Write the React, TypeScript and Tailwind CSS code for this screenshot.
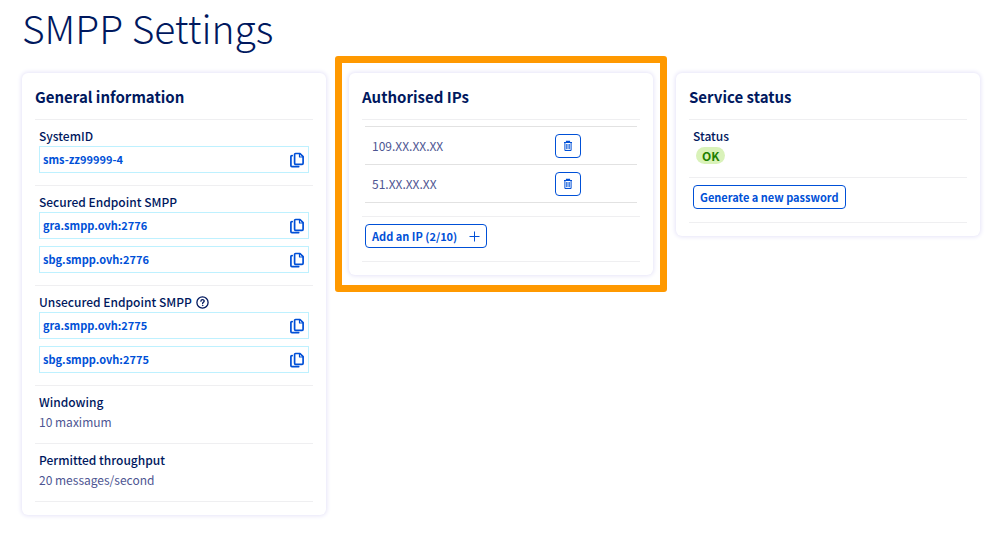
import type { ReactNode } from "react";

type CardProps = { title: string; children: ReactNode };

function Card({ title, children }: CardProps) {
  return (
    <section className="rounded-md bg-white px-[13px] pb-[13px] shadow-[0_0_4px_1px_#e6e4f8]">
      <h2 className="border-b border-[#efeff1] pt-[14px] pb-3 text-[15px] leading-5 font-bold">
        {title}
      </h2>
      {children}
    </section>
  );
}

function Item({ children }: { children: ReactNode }) {
  return <div className="border-b border-[#efeff1] px-1 pt-2 pb-3">{children}</div>;
}

function Label({ children }: { children: ReactNode }) {
  return <h3 className="mb-[2px] flex items-center gap-1 text-[12px] leading-4 font-medium">{children}</h3>;
}

function CopyIcon() {
  return (
    <svg viewBox="0 0 14 16" className="h-4 w-[14px]" fill="none" stroke="currentColor" strokeWidth="1.7" strokeLinejoin="round" strokeLinecap="round">
      <path d="M5.600 1.500h4.400l3.100 3.100v6.700a1 1 0 0 1-1 1H5.600a1 1 0 0 1-1-1V2.500a1 1 0 0 1 1-1Z" />
      <path d="M9.500 1.800v3.200h3.400" strokeWidth="1.200" />
      <path d="M2.200 3.600H1.900a1 1 0 0 0-1 1v9a1 1 0 0 0 1 1h6.800" />
    </svg>
  );
}

function HelpIcon() {
  return (
    <svg viewBox="0 0 13 13" className="h-[13px] w-[13px]" fill="none" stroke="currentColor" strokeWidth="1.3" strokeLinecap="round">
      <circle cx="6.5" cy="6.5" r="5.600" />
      <path d="M4.900 5.200c0-2.200 3.300-2.100 3.300-.1 0 1.200-1.600 1.200-1.600 2.500" />
      <circle cx="6.600" cy="9.400" r=".3" fill="currentColor" strokeWidth=".7" />
    </svg>
  );
}

function TrashIcon() {
  return (
    <svg viewBox="0 0 10 12" className="h-3 w-[10px]" fill="none" stroke="currentColor">
      <path d="M1 2.500h8M3.500 2.200V1.300h3v.9" strokeWidth="1.200" />
      <path d="M1.900 3v7.500h6.200V3" strokeWidth="1" />
      <path d="M3.600 4v5.200M5 4v5.200M6.400 4v5.200" strokeWidth=".8" />
    </svg>
  );
}

function CopyField({ value }: { value: string }) {
  return (
    <div className="flex h-[27px] items-center justify-between border border-[#bef1ff] pr-1 pl-[3px] text-[11px] font-bold text-[#0050d7]">
      <span>{value}</span>
      <button type="button" aria-label={`Copy ${value}`} className="cursor-pointer">
        <CopyIcon />
      </button>
    </div>
  );
}

const outlined =
  "flex h-6 cursor-pointer items-center rounded border border-[#0050d7] text-[11px] font-bold text-[#0050d7]";

export default function App() {
  return (
    <main className="min-h-screen bg-white pr-[26px] pb-6 pl-[22px] font-['Noto_Sans_CJK_SC','Noto_Sans',sans-serif] text-[#00185e]">
      <h1 className="pb-[18px] text-[39px] leading-[55px] font-light">SMPP Settings</h1>
      <div className="grid grid-cols-3 items-start gap-[23px]">
        <Card title="General information">
          <Item>
            <Label>SystemID</Label>
            <CopyField value="sms-zz99999-4" />
          </Item>
          <Item>
            <Label>Secured Endpoint SMPP</Label>
            <div className="flex flex-col gap-[7px]">
              <CopyField value="gra.smpp.ovh:2776" />
              <CopyField value="sbg.smpp.ovh:2776" />
            </div>
          </Item>
          <Item>
            <Label>
              Unsecured Endpoint SMPP
              <HelpIcon />
            </Label>
            <div className="flex flex-col gap-[7px]">
              <CopyField value="gra.smpp.ovh:2775" />
              <CopyField value="sbg.smpp.ovh:2775" />
            </div>
          </Item>
          <Item>
            <Label>Windowing</Label>
            <p className="text-[12px] leading-[19px] text-[#4d5592]">10 maximum</p>
          </Item>
          <Item>
            <Label>Permitted throughput</Label>
            <p className="text-[12px] leading-[19px] text-[#4d5592]">20 messages/second</p>
          </Item>
        </Card>

        <div className="relative">
          <Card title="Authorised IPs">
            <div className="border-b border-[#efeff1] px-[3px] pt-[6px] pb-[13px]">
              <table className="w-full border-collapse text-[12px] text-[#4d5592]">
                <tbody>
                  {["109.XX.XX.XX", "51.XX.XX.XX"].map((ip) => (
                    <tr key={ip} className="h-[38px] border-y border-[#e2e2e2]">
                      <td className="w-[70%] p-0 pl-[7px]">{ip}</td>
                      <td className="p-0">
                        <button type="button" aria-label={`Delete ${ip}`} className="flex h-6 w-[26px] cursor-pointer items-center justify-center rounded border border-[#0050d7] text-[#0050d7]">
                          <TrashIcon />
                        </button>
                      </td>
                    </tr>
                  ))}
                </tbody>
              </table>
            </div>
            <div className="border-b border-[#efeff1] px-[3px] pt-[7px] pb-[13px]">
              <button type="button" className={`${outlined} gap-3 px-[6px]`}>
                Add an IP (2/10)
                <svg viewBox="0 0 11 11" className="h-[11px] w-[11px]" stroke="currentColor">
                  <path d="M5.500 .5v10M.5 5.500h10" />
                </svg>
              </button>
            </div>
          </Card>
          <div className="pointer-events-none absolute -inset-x-[14px] -inset-y-[17px] rounded-[3px] border-[7px] border-[#ff9900]" />
        </div>

        <Card title="Service status">
          <Item>
            <Label>Status</Label>
            <p className="flex h-[19px] items-center pl-[3px]">
              <span className="rounded-full bg-[#d9f2b9] px-[6px] text-[12px] leading-[17px] font-bold text-[#1e8000]">OK</span>
            </p>
          </Item>
          <div className="border-b border-[#efeff1] px-1 pt-[7px] pb-[13px]">
            <button type="button" className={`${outlined} px-[6px]`}>
              Generate a new password
            </button>
          </div>
        </Card>
      </div>
    </main>
  );
}
